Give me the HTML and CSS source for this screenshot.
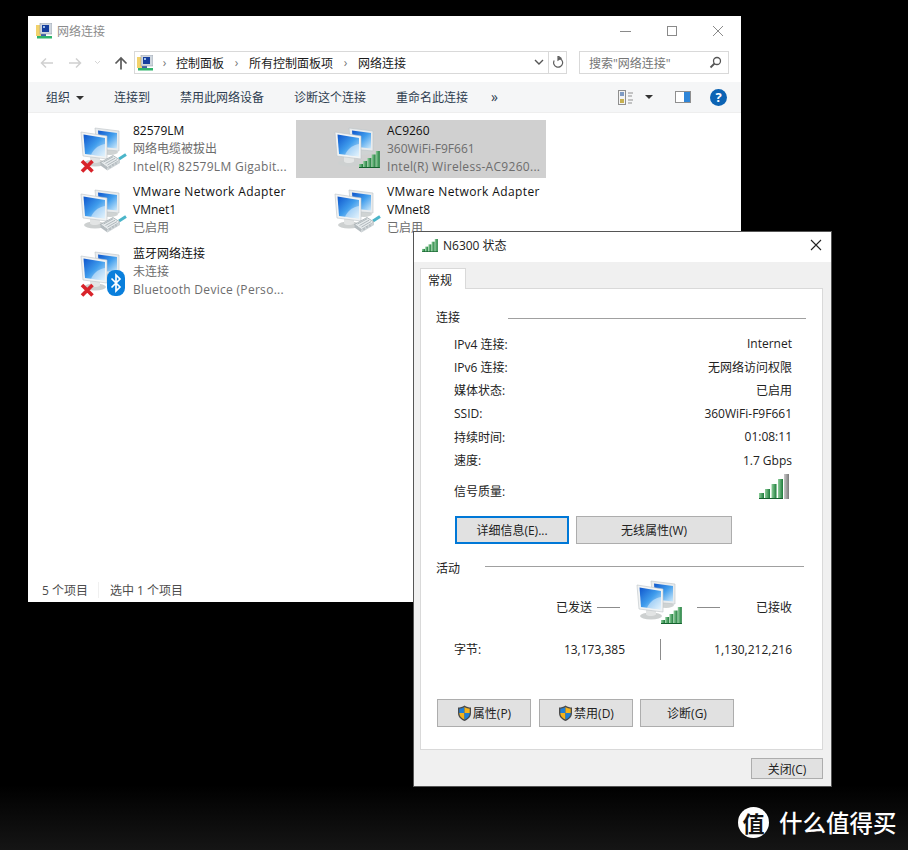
FILE: index.html
```html
<!DOCTYPE html>
<html lang="zh-CN">
<head>
<meta charset="UTF-8">
<meta name="viewport" content="width=device-width, initial-scale=1.0">
<title>网络连接</title>
<link rel="stylesheet" href="styles.css">
</head>
<body>

<!-- shared icon parts -->
<svg class="icon-defs" aria-hidden="true">
    <defs>
        <linearGradient id="screenBlue" x1="0" y1="0" x2="1" y2="1">
            <stop offset="0" stop-color="#0e55cc"/>
            <stop offset="0.5" stop-color="#3f9cec"/>
            <stop offset="1" stop-color="#cfeafb"/>
        </linearGradient>
        <linearGradient id="barGreen" x1="0" y1="0" x2="1" y2="0">
            <stop offset="0" stop-color="#8fd09c"/>
            <stop offset="1" stop-color="#1c7a3a"/>
        </linearGradient>
        <linearGradient id="barGray" x1="0" y1="0" x2="1" y2="0">
            <stop offset="0" stop-color="#c9c9c9"/>
            <stop offset="1" stop-color="#7a7a7a"/>
        </linearGradient>
        <g id="monitors">
            <ellipse cx="30" cy="25" rx="8" ry="3" fill="#cfd3d3"/>
            <path d="M15 1 L39 4 L39 24 L17 22 Z" fill="#e8ebed" stroke="#bcc2c6" stroke-width="0.6"/>
            <path d="M18 3.500 L37 6 L37 21.500 L19 19.500 Z" fill="url(#screenBlue)"/>
            <ellipse cx="15" cy="36" rx="11" ry="3.500" fill="#cdd0d0"/>
            <path d="M10 29 L20 30 L20 34.500 C17 36.500 12 36.500 10 34.500 Z" fill="#e2e4e4"/>
            <path d="M1 5 L27 9 L27 32 L3 29 Z" fill="#f1f3f4" stroke="#bcc2c6" stroke-width="0.6"/>
            <path d="M3.500 7.500 L25 11 L25 29.500 L5 27 Z" fill="url(#screenBlue)"/>
            <path d="M25 17 C19 18 13.500 22 11 27.800 L25 29.500 Z" fill="#ffffff" opacity="0.45"/>
        </g>
        <g id="redX">
            <path d="M2 2 L12.500 12.500 M12.500 2 L2 12.500" stroke="#d8232a" stroke-width="3.600"/>
        </g>
        <g id="cable">
            <path d="M19 6 L26 1.500" stroke="#4bb5c9" stroke-width="3"/>
            <path d="M0.500 9.500 L13 2.500 L20 7 L7.500 14.500 Z" fill="#e6eaec" stroke="#98a2a6" stroke-width="0.7"/>
            <path d="M0.500 9.500 L7.500 14.500 L7.500 17.500 L0.500 12.500 Z" fill="#b4bbbf"/>
            <path d="M7.500 14.500 L20 7 L20 10 L7.500 17.500 Z" fill="#cdd3d6"/>
            <path d="M3.500 9 L13 3.800 M5.500 10.500 L15 5.200 M7.500 12 L17 6.600 M10 15 V13 M13 13 V11 M16 11.500 V9.500" stroke="#98a2a6" stroke-width="0.7" fill="none"/>
        </g>
        <g id="bars">
            <rect x="0" y="13" width="4" height="4" fill="url(#barGreen)"/>
            <rect x="4.200" y="10" width="4" height="7" fill="url(#barGreen)"/>
            <rect x="8.400" y="7" width="4" height="10" fill="url(#barGreen)"/>
            <rect x="12.600" y="3.500" width="4" height="13.500" fill="url(#barGreen)"/>
            <rect x="16.800" y="0" width="4" height="17" fill="url(#barGreen)"/>
            <path d="M0 16.500 H20.800" stroke="#15622e"/>
        </g>
        <g id="bluetooth">
            <rect x="0" y="0" width="18" height="26" rx="8" fill="#0a7fdc"/>
            <path d="M4.500 8.500 L13 17 L9 21 L9 5 L13 9 L4.500 17.500" fill="none" stroke="#fff" stroke-width="1.700"/>
        </g>
        <g id="shield">
            <path d="M7.500 0.500 C5.500 2 3 2.500 1 2.500 L1 8 C1 12 4 14.500 7.500 16 C11 14.500 14 12 14 8 L14 2.500 C12 2.500 9.500 2 7.500 0.500 Z" fill="#4a4a4a"/>
            <path d="M7.500 2 L7.500 8 L2.300 8 L2.300 3.700 C4 3.600 6 3.100 7.500 2 Z" fill="#1f7fd6"/>
            <path d="M7.500 2 L7.500 8 L12.700 8 L12.700 3.700 C11 3.600 9 3.100 7.500 2 Z" fill="#f3b31b"/>
            <path d="M2.300 8 L7.500 8 L7.500 14.500 C4.500 13.300 2.300 11.200 2.300 8 Z" fill="#f3b31b"/>
            <path d="M12.700 8 L7.500 8 L7.500 14.500 C10.500 13.300 12.700 11.200 12.700 8 Z" fill="#1f7fd6"/>
        </g>
        <g id="cplIcon">
            <rect x="0" y="2" width="9" height="11" fill="#f2d26b"/>
            <rect x="1" y="13" width="15" height="2.500" fill="#2fb36b"/>
            <rect x="5" y="11" width="5" height="2" fill="#3c5fa8"/>
            <rect x="4" y="0" width="12" height="11" fill="#cfd6de" stroke="#8a94a0" stroke-width="0.500"/>
            <rect x="6" y="2" width="7" height="7" fill="#163f9e"/>
            <rect x="7" y="3" width="2" height="2" fill="#9fc0ea"/>
        </g>
    </defs>
</svg>

<div class="window explorer">
    <div class="ex-title">
        <svg class="small-icon" viewBox="0 0 16 16"><use href="#cplIcon"/></svg>
        <span>网络连接</span>
        <div class="win-controls">
            <svg width="12" height="12" viewBox="0 0 12 12"><path d="M0 6.500 H11" stroke="#8a8a8a"/></svg>
            <svg width="12" height="12" viewBox="0 0 12 12"><rect x="1.500" y="1.500" width="9" height="9" fill="none" stroke="#8a8a8a"/></svg>
            <svg width="12" height="12" viewBox="0 0 12 12"><path d="M1 1 L11 11 M11 1 L1 11" stroke="#8a8a8a"/></svg>
        </div>
    </div>

    <div class="ex-address">
        <div class="nav-btns">
            <svg width="14" height="12" viewBox="0 0 14 12"><path d="M13 6 H2 M6 1.500 L1.500 6 L6 10.500" fill="none" stroke="#d0d0d0" stroke-width="1.500"/></svg>
            <svg width="14" height="12" viewBox="0 0 14 12"><path d="M1 6 H12 M8 1.500 L12.500 6 L8 10.500" fill="none" stroke="#d0d0d0" stroke-width="1.500"/></svg>
            <svg width="7" height="5" viewBox="0 0 7 5"><path d="M1 1 L3.500 3.500 L6 1" fill="none" stroke="#d5d5d5"/></svg>
            <svg width="14" height="14" viewBox="0 0 14 14"><path d="M7 13.500 V2 M1.500 7.500 L7 2 L12.500 7.500" fill="none" stroke="#5a5a5a" stroke-width="1.700"/></svg>
        </div>
        <div class="address-box">
            <svg class="small-icon" viewBox="0 0 16 16"><use href="#cplIcon"/></svg>
            <span class="crumb-arrow first">›</span><span>控制面板</span>
            <span class="crumb-arrow">›</span><span>所有控制面板项</span>
            <span class="crumb-arrow">›</span><span>网络连接</span>
            <svg class="addr-chevron" width="10" height="7" viewBox="0 0 10 7"><path d="M1 1 L5 5 L9 1" fill="none" stroke="#555" stroke-width="1.400"/></svg>
            <span class="addr-sep"></span>
            <svg class="addr-refresh" width="12" height="13" viewBox="0 0 12 13"><path d="M6.500 2.200 A4.500 4.500 0 1 1 2.200 4.500 M6 0 L6 4.200 L9 2.200 Z" fill="none" stroke="#5f5f5f" stroke-width="1.200"/></svg>
        </div>
        <div class="search-box">
            <span>搜索"网络连接"</span>
            <svg width="13" height="13" viewBox="0 0 13 13"><circle cx="8" cy="5" r="3.500" fill="none" stroke="#555" stroke-width="1.300"/><path d="M5.500 7.500 L1.500 11.500" stroke="#555" stroke-width="1.800"/></svg>
        </div>
    </div>

    <div class="ex-toolbar">
        <span class="tb-first">组织<i class="caret"></i></span>
        <span class="tb-connect">连接到</span>
        <span class="tb-disable">禁用此网络设备</span>
        <span class="tb-diag">诊断这个连接</span>
        <span class="tb-rename">重命名此连接</span>
        <span class="tb-more">»</span>
        <div class="tb-right">
            <svg width="15" height="15" viewBox="0 0 15 15"><rect x="0.500" y="0.500" width="7" height="14" fill="#f4f4f4" stroke="#8f8f8f"/><rect x="2" y="2" width="4" height="4" fill="#7f9bc4"/><rect x="2" y="9" width="4" height="4" fill="#c7b04f"/><path d="M10 3 H15 M10 6 H14 M10 10 H15 M10 13 H14" stroke="#8f8f8f"/></svg>
            <i class="caret"></i>
            <svg class="tb-pane" width="16" height="12" viewBox="0 0 16 12"><rect x="0.500" y="0.500" width="15" height="11" fill="#fff" stroke="#8f8f8f"/><rect x="9" y="1" width="6" height="10" fill="#2f86d8"/></svg>
            <span class="help">?</span>
        </div>
    </div>

    <div class="ex-items">
        <div class="item">
            <svg class="net-icon" viewBox="0 0 52 54"><use href="#monitors" y="5"/><use href="#redX" x="0" y="37"/><use href="#cable" x="20" y="31"/></svg>
            <div class="item-text">
                <div class="name">82579LM</div>
                <div>网络电缆被拔出</div>
                <div class="wide-latin">Intel(R) 82579LM Gigabit...</div>
            </div>
        </div>
        <div class="item selected">
            <svg class="net-icon" viewBox="0 0 52 54"><use href="#monitors" y="5"/><use href="#bars" x="25" y="29"/></svg>
            <div class="item-text">
                <div class="name">AC9260</div>
                <div>360WiFi-F9F661</div>
                <div class="wide-latin">Intel(R) Wireless-AC9260...</div>
            </div>
        </div>
        <div class="item">
            <svg class="net-icon" viewBox="0 0 52 54"><use href="#monitors" y="5"/><use href="#cable" x="20" y="31"/></svg>
            <div class="item-text">
                <div class="name wide-name">VMware Network Adapter</div>
                <div class="name">VMnet1</div>
                <div>已启用</div>
            </div>
        </div>
        <div class="item">
            <svg class="net-icon" viewBox="0 0 52 54"><use href="#monitors" y="5"/><use href="#cable" x="20" y="31"/></svg>
            <div class="item-text">
                <div class="name wide-name">VMware Network Adapter</div>
                <div class="name">VMnet8</div>
                <div>已启用</div>
            </div>
        </div>
        <div class="item">
            <svg class="net-icon" viewBox="0 0 52 54"><use href="#monitors" y="5"/><use href="#redX" x="0" y="37"/><use href="#bluetooth" x="27" y="24"/></svg>
            <div class="item-text">
                <div class="name">蓝牙网络连接</div>
                <div>未连接</div>
                <div class="wide-latin">Bluetooth Device (Perso...</div>
            </div>
        </div>
    </div>

    <div class="ex-status">
        <span>5 个项目</span>
        <span class="status-sep"></span>
        <span>选中 1 个项目</span>
    </div>
</div>

<div class="window dialog">
    <div class="dlg-title">
        <svg class="dlg-bars" viewBox="0 0 21 17"><use href="#bars"/></svg>
        <span>N6300 状态</span>
        <svg class="dlg-close" width="12" height="12" viewBox="0 0 12 12"><path d="M1 1 L11 11 M11 1 L1 11" stroke="#222" stroke-width="1.100"/></svg>
    </div>
    <div class="dlg-body">
        <div class="tab">常规</div>
        <div class="panel">
            <div class="group-head head-conn"><span>连接</span><i></i></div>
            <div class="info-rows">
                <div class="info-row"><span>IPv4 连接:</span><span>Internet</span></div>
                <div class="info-row"><span>IPv6 连接:</span><span>无网络访问权限</span></div>
                <div class="info-row"><span>媒体状态:</span><span>已启用</span></div>
                <div class="info-row"><span>SSID:</span><span>360WiFi-F9F661</span></div>
                <div class="info-row"><span>持续时间:</span><span>01:08:11</span></div>
                <div class="info-row"><span>速度:</span><span>1.7 Gbps</span></div>
            </div>
            <div class="signal-row">
                <span>信号质量:</span>
                <svg width="31" height="26" viewBox="0 0 31 26">
                    <rect x="0" y="19" width="5" height="6" fill="url(#barGreen)"/>
                    <rect x="6" y="15" width="5" height="10" fill="url(#barGreen)"/>
                    <rect x="12.500" y="10" width="5" height="15" fill="url(#barGreen)"/>
                    <rect x="19" y="5" width="5" height="20" fill="url(#barGreen)"/>
                    <rect x="25" y="0" width="5" height="25" fill="url(#barGray)"/>
                    <path d="M0 24.500 H24" stroke="#15622e"/>
                </svg>
            </div>
            <div class="btn-row top-btns">
                <button class="btn focused">详细信息(E)...</button>
                <button class="btn wide">无线属性(W)</button>
            </div>

            <div class="group-head head-act"><span>活动</span><i></i></div>
            <div class="activity">
                <span class="act-sent">已发送</span>
                <i class="dash"></i>
                <svg class="act-icon" viewBox="0 0 48 46"><use href="#monitors"/><use href="#bars" x="25" y="27"/></svg>
                <i class="dash"></i>
                <span class="act-recv">已接收</span>
            </div>
            <div class="bytes">
                <span>字节:</span>
                <span class="num">13,173,385</span>
                <i class="bytes-sep"></i>
                <span class="num">1,130,212,216</span>
            </div>
            <div class="btn-row bottom-btns">
                <button class="btn"><svg class="shield" viewBox="0 0 15 17"><use href="#shield"/></svg>属性(P)</button>
                <button class="btn"><svg class="shield" viewBox="0 0 15 17"><use href="#shield"/></svg>禁用(D)</button>
                <button class="btn diag-btn">诊断(G)</button>
            </div>
        </div>
        <div class="dlg-footer">
            <button class="btn close-btn">关闭(C)</button>
        </div>
    </div>
</div>

<div class="watermark">
    <span class="wm-logo">值</span>
    <span class="wm-text">什么值得买</span>
</div>

</body>
</html>
```

FILE: styles.css
```css
* {
    box-sizing: border-box;
}

body {
    margin: 0;
    width: 908px;
    height: 850px;
    position: relative;
    overflow: hidden;
    background: linear-gradient(#000 785px, #151515 850px);
    font-family: "Open Sans", "Noto Sans CJK SC", sans-serif;
    font-size: 12px;
    color: #222;
}

.icon-defs {
    display: block;
    width: 0;
    height: 0;
}

.window {
    position: absolute;
    display: flex;
    flex-direction: column;
    background: #fff;
}

/* explorer window */
.explorer {
    left: 28px;
    top: 16px;
    width: 713px;
    height: 586px;
}

.small-icon {
    width: 16px;
    height: 16px;
    flex: none;
}

.ex-title {
    display: flex;
    align-items: center;
    height: 34px;
    padding: 0 0 4px 8px;
    color: #8c8c8c;
}

.ex-title .small-icon {
    margin-right: 5px;
}

.win-controls {
    margin-left: auto;
    display: flex;
    gap: 34px;
    padding-right: 17px;
}

.ex-address {
    display: flex;
    align-items: center;
    height: 32px;
    padding-bottom: 7px;
}

.nav-btns {
    width: 106px;
    display: flex;
    align-items: center;
    gap: 14px;
    padding-left: 12px;
}

.nav-btns svg:nth-child(3) {
    margin: 0 -1px 0 -2px;
}

.address-box {
    width: 433px;
    height: 23px;
    display: flex;
    align-items: center;
    border: 1px solid #d9d9d9;
    padding-left: 2px;
    color: #1a1a1a;
}

.crumb-arrow {
    width: 25px;
    text-align: center;
    color: #777;
}

.crumb-arrow.first {
    width: 23px;
}

.addr-chevron {
    margin-left: auto;
    margin-right: 2px;
}

.addr-sep {
    width: 1px;
    height: 21px;
    background: #d9d9d9;
    margin: 0 3px 0 2px;
}

.addr-refresh {
    margin-right: 2px;
}

.search-box {
    width: 150px;
    height: 23px;
    margin-left: 12px;
    display: flex;
    align-items: center;
    justify-content: space-between;
    border: 1px solid #d9d9d9;
    padding: 0 6px 0 9px;
    color: #767676;
}

.ex-toolbar {
    display: flex;
    align-items: center;
    height: 31px;
    background: #f5f6f7;
    border-bottom: 1px solid #eeeeee;
    color: #2e3d50;
}

.tb-first {
    margin-left: 18px;
    width: 68px;
}

.tb-connect {
    width: 66px;
}

.tb-disable {
    width: 114px;
}

.tb-diag {
    width: 102px;
}

.tb-rename {
    width: 95px;
}

.tb-more {
    font-size: 14px;
    line-height: 14px;
}

.caret {
    display: inline-block;
    width: 0;
    height: 0;
    margin-left: 6px;
    vertical-align: 2px;
    border-left: 4px solid transparent;
    border-right: 4px solid transparent;
    border-top: 4px solid #333;
}

.tb-right {
    margin-left: auto;
    display: flex;
    align-items: center;
    padding-right: 14px;
}

.tb-right .caret {
    margin-left: 12px;
}

.tb-pane {
    margin-left: 22px;
}

.help {
    width: 17px;
    height: 17px;
    margin-left: 19px;
    border-radius: 50%;
    background: #0c63b4;
    color: #fff;
    font-weight: 700;
    font-size: 13px;
    line-height: 17px;
    text-align: center;
}

.ex-items {
    flex: 1;
    display: grid;
    grid-template-columns: 250px 250px;
    grid-auto-rows: 58px;
    column-gap: 4px;
    row-gap: 3.75px;
    padding: 7px 0 0 14px;
}

.item {
    display: flex;
    align-items: center;
    color: #6d6d6d;
    line-height: 18px;
}

.item.selected {
    background: #d0d0d0;
}

.net-icon {
    width: 52px;
    height: 54px;
    flex: none;
    margin-left: 38px;
    overflow: visible;
}

.item-text {
    margin-left: 1px;
    margin-top: -1px;
    white-space: nowrap;
}

.name {
    color: #111;
}

.wide-latin {
    letter-spacing: 0.3px;
}

.wide-name {
    letter-spacing: 0.38px;
}

.ex-status {
    display: flex;
    align-items: center;
    height: 24px;
    padding-left: 14px;
    color: #4c4c4c;
}

.status-sep {
    width: 1px;
    height: 16px;
    background: #f0f0f0;
    margin: 0 11px 0 10px;
}

/* status dialog */
.dialog {
    left: 413px;
    top: 231px;
    width: 419px;
    height: 556px;
    border: 1px solid #555;
}

.dlg-title {
    display: flex;
    align-items: center;
    height: 30px;
    flex: none;
    padding: 0 0 4px 8px;
    color: #222;
}

.dlg-bars {
    width: 16px;
    height: 13px;
    margin-right: 5px;
}

.dlg-close {
    margin-left: auto;
    margin-right: 9px;
}

.dlg-body {
    flex: 1;
    display: flex;
    flex-direction: column;
    background: #f0f0f0;
    padding: 6px 8px 0 6px;
}

.tab {
    width: 46px;
    height: 21px;
    margin-bottom: -1px;
    position: relative;
    z-index: 1;
    background: #fff;
    border: 1px solid #d9d9d9;
    border-bottom: none;
    padding: 2px 0 0 7px;
}

.panel {
    height: 462px;
    flex: none;
    background: #fff;
    border: 1px solid #d9d9d9;
    padding-top: 19px;
}

.group-head {
    display: flex;
    align-items: center;
    height: 18px;
    padding-left: 15px;
}

.group-head i {
    flex: 1;
    height: 1px;
    background: #a0a0a0;
}

.head-conn i {
    margin: 2px 16px 0 48px;
}

.head-act {
    margin-top: 15px;
}

.head-act i {
    margin: -3px 18px 0 25px;
}

.info-rows {
    margin-top: 6px;
}

.info-row {
    display: flex;
    justify-content: space-between;
    align-items: center;
    height: 23.3px;
    padding: 0 30px 0 33px;
}

.signal-row {
    display: flex;
    justify-content: space-between;
    align-items: center;
    height: 30px;
    margin-top: 2.6px;
    padding: 0 32px 0 33px;
}

.signal-row span {
    padding-top: 4px;
}

.signal-row svg {
    margin-top: -4px;
}

.btn-row {
    display: flex;
}

.top-btns {
    margin-top: 12px;
    padding-left: 34px;
    gap: 7px;
}

.bottom-btns {
    margin-top: 39px;
    padding-left: 16px;
    gap: 8px;
}

.btn {
    width: 94px;
    height: 28px;
    padding: 0;
    display: flex;
    align-items: center;
    justify-content: center;
    background: #e1e1e1;
    border: 1px solid #adadad;
    font: inherit;
    color: #222;
}

.btn.focused {
    width: 114px;
    border: 2px solid #0078d7;
}

.btn.wide {
    width: 156px;
}

.btn.diag-btn {
    margin-left: -1px;
}

.shield {
    width: 15px;
    height: 17px;
    margin-right: 1px;
}

.activity {
    display: flex;
    align-items: center;
    height: 50px;
    margin-top: 5px;
}

.act-sent {
    width: 171px;
    text-align: right;
}

.dash {
    width: 23px;
    height: 1px;
    background: #8c8c8c;
    margin-left: 5px;
}

.act-icon {
    width: 48px;
    height: 46px;
    margin: -2px 13px 0 16px;
    align-self: flex-start;
}

.act-icon + .dash {
    margin-left: 0;
}

.act-recv {
    margin-left: auto;
    margin-right: 30px;
}

.bytes {
    display: grid;
    grid-template-columns: 204px 70px 1fr;
    align-items: center;
    height: 22px;
    margin-top: 6px;
    padding-right: 30px;
    position: relative;
}

.bytes > span:first-child {
    position: absolute;
    left: 33px;
}

.bytes .num:last-child {
    text-align: right;
}

.bytes .num:nth-child(2) {
    text-align: right;
    grid-column: 1;
}

.bytes-sep {
    grid-column: 2;
    justify-self: center;
    width: 1px;
    height: 21px;
    background: #8c8c8c;
}

.dlg-footer {
    flex: 1;
    display: flex;
    justify-content: flex-end;
    padding-top: 8px;
}

.close-btn {
    width: 72px;
    height: 21px;
}

/* watermark */
.watermark {
    position: absolute;
    left: 738px;
    top: 807px;
    display: flex;
    align-items: center;
    gap: 10px;
    color: #fff;
}

.wm-logo {
    width: 31px;
    height: 31px;
    border-radius: 50%;
    background: #fff;
    color: #111;
    font-family: "Noto Sans CJK SC", sans-serif;
    font-size: 22px;
    font-weight: 700;
    line-height: 30px;
    text-align: center;
}

.wm-text {
    font-family: "Noto Sans CJK SC", sans-serif;
    font-size: 23.5px;
    font-weight: 500;
    line-height: 31px;
}
```
